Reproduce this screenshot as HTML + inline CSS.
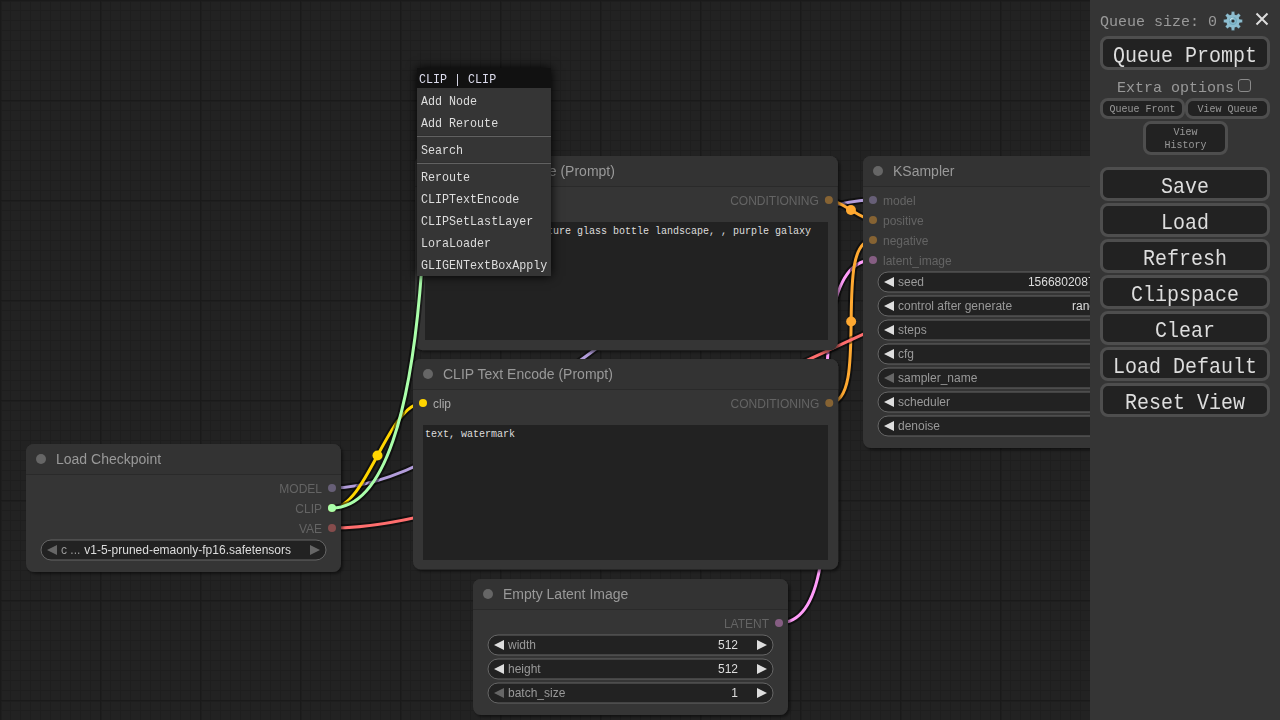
<!DOCTYPE html>
<html><head><meta charset="utf-8"><style>
html,body{margin:0;padding:0;width:1280px;height:720px;overflow:hidden;background:#222;}
svg,.panel,.qs,.btn{will-change:transform;}
svg text{font-family:"Liberation Sans",sans-serif;}
.tt{font-size:14px;fill:#999;}
.st{font-size:12px;}
.wl{font-size:12px;fill:#999;}
.wv{font-size:12px;fill:#DDD;}
.ta{position:absolute;background:#222;color:#ddd;font-family:"Liberation Mono",monospace;font-size:10px;line-height:12px;padding:4px 2px 2px 2px;box-sizing:border-box;white-space:pre-wrap;overflow:hidden;}
.menu{position:absolute;left:417px;top:68px;width:134px;height:208px;background:#353535;box-shadow:0 0 10px #000;font-family:"Liberation Mono",monospace;font-size:11.7px;}
.mt{height:20px;background:#111;color:#dde;padding-left:2px;line-height:20px;box-sizing:border-box;padding-top:2px;}
.me{height:20px;margin:2px;padding-left:2px;color:#ddd;line-height:20px;box-sizing:border-box;padding-top:2px;white-space:nowrap;}
.sep{border-top:1px solid #303030;border-bottom:1px solid #616161;height:0;margin:3px 0 2px 0;}
.panel{position:absolute;left:1090px;top:0;width:190px;height:720px;background:#353535;font-family:"Liberation Mono",monospace;color:#999;}
.qs{position:absolute;left:1100px;top:14px;font-size:15px;line-height:18px;color:#999;font-family:"Liberation Mono",monospace;}
.btn{position:absolute;box-sizing:border-box;border:3px solid #4e4e4e;background:#222;color:#ddd;border-radius:8px;text-align:center;font-family:"Liberation Mono",monospace;}
.big{left:1100px;width:170px;height:34px;font-size:20px;line-height:28px;padding-top:3.5px;}
.sy1{display:inline-block;transform:scaleY(1.12);transform-origin:50% 19.3px;}
.sy2{display:inline-block;transform:scaleY(1.1);transform-origin:50% 11px;}
.ms{display:inline-block;transform:scaleY(1.1);transform-origin:0 13px;}
.sm{font-size:10px;color:#999;line-height:14px;}
</style></head><body>
<svg width="1280" height="720" style="position:absolute;left:0;top:0">
<defs>
<pattern id="g" width="100" height="100" patternUnits="userSpaceOnUse"><rect x="10" y="0" width="1" height="100" fill="#1e1e1e"/><rect x="0" y="10" width="100" height="1" fill="#1e1e1e"/><rect x="20" y="0" width="1" height="100" fill="#1e1e1e"/><rect x="0" y="20" width="100" height="1" fill="#1e1e1e"/><rect x="30" y="0" width="1" height="100" fill="#1e1e1e"/><rect x="0" y="30" width="100" height="1" fill="#1e1e1e"/><rect x="40" y="0" width="1" height="100" fill="#1e1e1e"/><rect x="0" y="40" width="100" height="1" fill="#1e1e1e"/><rect x="50" y="0" width="1" height="100" fill="#1e1e1e"/><rect x="0" y="50" width="100" height="1" fill="#1e1e1e"/><rect x="60" y="0" width="1" height="100" fill="#1e1e1e"/><rect x="0" y="60" width="100" height="1" fill="#1e1e1e"/><rect x="70" y="0" width="1" height="100" fill="#1e1e1e"/><rect x="0" y="70" width="100" height="1" fill="#1e1e1e"/><rect x="80" y="0" width="1" height="100" fill="#1e1e1e"/><rect x="0" y="80" width="100" height="1" fill="#1e1e1e"/><rect x="90" y="0" width="1" height="100" fill="#1e1e1e"/><rect x="0" y="90" width="100" height="1" fill="#1e1e1e"/><rect x="1" y="0" width="1" height="100" fill="#1e1e1e"/><rect x="0" y="1" width="100" height="1" fill="#1e1e1e"/><rect x="0" y="0" width="1" height="100" fill="#1a1a1a"/><rect x="0" y="0" width="100" height="1" fill="#1a1a1a"/></pattern>
<filter id="sh" x="-10%" y="-10%" width="120%" height="120%"><feDropShadow dx="2" dy="2" stdDeviation="1.5" flood-color="#000" flood-opacity="0.5"/></filter>
</defs>
<rect width="1280" height="720" fill="#222"/>
<rect width="1280" height="720" fill="url(#g)"/>
<path d="M332 488 C485.22 488 719.78 200 873 200" stroke="rgba(0,0,0,0.5)" stroke-width="7" fill="none"/>
<path d="M332 488 C485.22 488 719.78 200 873 200" stroke="#B39DDB" stroke-width="3" fill="none"/>
<circle cx="602.5" cy="344" r="5" fill="#B39DDB"/>
<path d="M779 623 C872.74 623 779.26 260 873 260" stroke="rgba(0,0,0,0.5)" stroke-width="7" fill="none"/>
<path d="M779 623 C872.74 623 779.26 260 873 260" stroke="#FF9CF9" stroke-width="3" fill="none"/>
<circle cx="826" cy="441.5" r="5" fill="#FF9CF9"/>
<path d="M828.85 200 C840.97 200 860.88 220 873 220" stroke="rgba(0,0,0,0.5)" stroke-width="7" fill="none"/>
<path d="M828.85 200 C840.97 200 860.88 220 873 220" stroke="#FFA931" stroke-width="3" fill="none"/>
<circle cx="850.92" cy="210" r="5" fill="#FFA931"/>
<path d="M332 508 C366.74 508 388.26 403 423 403" stroke="rgba(0,0,0,0.5)" stroke-width="7" fill="none"/>
<path d="M332 508 C366.74 508 388.26 403 423 403" stroke="#FFD500" stroke-width="3" fill="none"/>
<circle cx="377.5" cy="455.5" r="5" fill="#FFD500"/>
<path d="M829.28 403 C871.47 403 830.81 240 873 240" stroke="rgba(0,0,0,0.5)" stroke-width="7" fill="none"/>
<path d="M829.28 403 C871.47 403 830.81 240 873 240" stroke="#FFA931" stroke-width="3" fill="none"/>
<circle cx="851.14" cy="321.5" r="5" fill="#FFA931"/>
<path d="M1169 200 C1181.51 200 1206.49 202 1219 202" stroke="rgba(0,0,0,0.5)" stroke-width="7" fill="none"/>
<path d="M1169 200 C1181.51 200 1206.49 202 1219 202" stroke="#FF9CF9" stroke-width="3" fill="none"/>
<circle cx="1194" cy="201" r="5" fill="#FF9CF9"/>
<path d="M332 528 C566.57 528 984.43 222 1219 222" stroke="rgba(0,0,0,0.5)" stroke-width="7" fill="none"/>
<path d="M332 528 C566.57 528 984.43 222 1219 222" stroke="#FF6E6E" stroke-width="3" fill="none"/>
<circle cx="775.5" cy="375" r="5" fill="#FF6E6E"/>
<path d="M871 156 h299 a8 8 0 0 1 8 8 v276 a8 8 0 0 1 -8 8 h-299 a8 8 0 0 1 -8 -8 v-276 a8 8 0 0 1 8 -8 Z" fill="#353535" filter="url(#sh)"/>
<rect x="863" y="186" width="315" height="1" fill="rgba(0,0,0,0.2)"/>
<path d="M871 156 h299 a8 8 0 0 1 8 8 V186 H863 V164 a8 8 0 0 1 8 -8 Z" fill="#333"/>
<circle cx="878" cy="171" r="5" fill="#666"/>
<text x="893" y="176" class="tt">KSampler</text>
<circle cx="873" cy="200" r="4" fill="#675f77"/>
<text x="883" y="205" class="st" fill="#646464">model</text>
<circle cx="873" cy="220" r="4" fill="#866333"/>
<text x="883" y="225" class="st" fill="#646464">positive</text>
<circle cx="873" cy="240" r="4" fill="#866333"/>
<text x="883" y="245" class="st" fill="#646464">negative</text>
<circle cx="873" cy="260" r="4" fill="#865e83"/>
<text x="883" y="265" class="st" fill="#646464">latent_image</text>
<circle cx="1169" cy="200" r="4" fill="#865e83"/>
<text x="1159" y="205" class="st" text-anchor="end" fill="#646464">LATENT</text>
<rect x="878" y="272" width="285" height="20" rx="10" fill="#222" stroke="#666" stroke-width="1"/>
<path d="M894 277 L884 282 L894 287 Z" fill="#DDD"/>
<path d="M1147 277 L1157 282 L1147 287 Z" fill="#DDD"/>
<text x="898" y="286" class="wl">seed</text>
<text x="1128" y="286" class="wv" text-anchor="end">156680208700286</text>
<rect x="878" y="296" width="285" height="20" rx="10" fill="#222" stroke="#666" stroke-width="1"/>
<path d="M894 301 L884 306 L894 311 Z" fill="#DDD"/>
<path d="M1147 301 L1157 306 L1147 311 Z" fill="#DDD"/>
<text x="898" y="310" class="wl">control after generate</text>
<text x="1128" y="310" class="wv" text-anchor="end">randomize</text>
<rect x="878" y="320" width="285" height="20" rx="10" fill="#222" stroke="#666" stroke-width="1"/>
<path d="M894 325 L884 330 L894 335 Z" fill="#DDD"/>
<path d="M1147 325 L1157 330 L1147 335 Z" fill="#DDD"/>
<text x="898" y="334" class="wl">steps</text>
<text x="1128" y="334" class="wv" text-anchor="end">20</text>
<rect x="878" y="344" width="285" height="20" rx="10" fill="#222" stroke="#666" stroke-width="1"/>
<path d="M894 349 L884 354 L894 359 Z" fill="#DDD"/>
<path d="M1147 349 L1157 354 L1147 359 Z" fill="#DDD"/>
<text x="898" y="358" class="wl">cfg</text>
<text x="1128" y="358" class="wv" text-anchor="end">8.0</text>
<rect x="878" y="368" width="285" height="20" rx="10" fill="#222" stroke="#666" stroke-width="1"/>
<path d="M894 373 L884 378 L894 383 Z" fill="#666"/>
<path d="M1147 373 L1157 378 L1147 383 Z" fill="#DDD"/>
<text x="898" y="382" class="wl">sampler_name</text>
<text x="1128" y="382" class="wv" text-anchor="end">euler</text>
<rect x="878" y="392" width="285" height="20" rx="10" fill="#222" stroke="#666" stroke-width="1"/>
<path d="M894 397 L884 402 L894 407 Z" fill="#DDD"/>
<path d="M1147 397 L1157 402 L1147 407 Z" fill="#DDD"/>
<text x="898" y="406" class="wl">scheduler</text>
<text x="1128" y="406" class="wv" text-anchor="end">normal</text>
<rect x="878" y="416" width="285" height="20" rx="10" fill="#222" stroke="#666" stroke-width="1"/>
<path d="M894 421 L884 426 L894 431 Z" fill="#DDD"/>
<path d="M1147 421 L1157 426 L1147 431 Z" fill="#666"/>
<text x="898" y="430" class="wl">denoise</text>
<text x="1128" y="430" class="wv" text-anchor="end">1.00</text>
<path d="M34 444 h299 a8 8 0 0 1 8 8 v112 a8 8 0 0 1 -8 8 h-299 a8 8 0 0 1 -8 -8 v-112 a8 8 0 0 1 8 -8 Z" fill="#353535" filter="url(#sh)"/>
<rect x="26" y="474" width="315" height="1" fill="rgba(0,0,0,0.2)"/>
<path d="M34 444 h299 a8 8 0 0 1 8 8 V474 H26 V452 a8 8 0 0 1 8 -8 Z" fill="#333"/>
<circle cx="41" cy="459" r="5" fill="#666"/>
<text x="56" y="464" class="tt">Load Checkpoint</text>
<circle cx="332" cy="488" r="4" fill="#675f77"/>
<text x="322" y="493" class="st" text-anchor="end" fill="#646464">MODEL</text>
<circle cx="332" cy="508" r="4" fill="#867520"/>
<text x="322" y="513" class="st" text-anchor="end" fill="#646464">CLIP</text>
<circle cx="332" cy="528" r="4" fill="#864c4c"/>
<text x="322" y="533" class="st" text-anchor="end" fill="#646464">VAE</text>
<rect x="41" y="540" width="285" height="20" rx="10" fill="#222" stroke="#666" stroke-width="1"/>
<path d="M57 545 L47 550 L57 555 Z" fill="#666"/>
<path d="M310 545 L320 550 L310 555 Z" fill="#666"/>
<text x="61" y="554" class="wl">c ...</text>
<text x="291" y="554" class="wv" text-anchor="end">v1-5-pruned-emaonly-fp16.safetensors</text>
<path d="M481 579 h299 a8 8 0 0 1 8 8 v120 a8 8 0 0 1 -8 8 h-299 a8 8 0 0 1 -8 -8 v-120 a8 8 0 0 1 8 -8 Z" fill="#353535" filter="url(#sh)"/>
<rect x="473" y="609" width="315" height="1" fill="rgba(0,0,0,0.2)"/>
<path d="M481 579 h299 a8 8 0 0 1 8 8 V609 H473 V587 a8 8 0 0 1 8 -8 Z" fill="#333"/>
<circle cx="488" cy="594" r="5" fill="#666"/>
<text x="503" y="599" class="tt">Empty Latent Image</text>
<circle cx="779" cy="623" r="4" fill="#865e83"/>
<text x="769" y="628" class="st" text-anchor="end" fill="#646464">LATENT</text>
<rect x="488" y="635" width="285" height="20" rx="10" fill="#222" stroke="#666" stroke-width="1"/>
<path d="M504 640 L494 645 L504 650 Z" fill="#DDD"/>
<path d="M757 640 L767 645 L757 650 Z" fill="#DDD"/>
<text x="508" y="649" class="wl">width</text>
<text x="738" y="649" class="wv" text-anchor="end">512</text>
<rect x="488" y="659" width="285" height="20" rx="10" fill="#222" stroke="#666" stroke-width="1"/>
<path d="M504 664 L494 669 L504 674 Z" fill="#DDD"/>
<path d="M757 664 L767 669 L757 674 Z" fill="#DDD"/>
<text x="508" y="673" class="wl">height</text>
<text x="738" y="673" class="wv" text-anchor="end">512</text>
<rect x="488" y="683" width="285" height="20" rx="10" fill="#222" stroke="#666" stroke-width="1"/>
<path d="M504 688 L494 693 L504 698 Z" fill="#666"/>
<path d="M757 688 L767 693 L757 698 Z" fill="#DDD"/>
<text x="508" y="697" class="wl">batch_size</text>
<text x="738" y="697" class="wv" text-anchor="end">1</text>
<path d="M423 156 h406.85 a8 8 0 0 1 8 8 v178.31 a8 8 0 0 1 -8 8 h-406.85 a8 8 0 0 1 -8 -8 v-178.31 a8 8 0 0 1 8 -8 Z" fill="#353535" filter="url(#sh)"/>
<rect x="415" y="186" width="422.85" height="1" fill="rgba(0,0,0,0.2)"/>
<path d="M423 156 h406.85 a8 8 0 0 1 8 8 V186 H415 V164 a8 8 0 0 1 8 -8 Z" fill="#333"/>
<circle cx="430" cy="171" r="5" fill="#666"/>
<text x="445" y="176" class="tt">CLIP Text Encode (Prompt)</text>
<circle cx="425" cy="200" r="4" fill="#ffd500"/>
<text x="435" y="205" class="st" fill="#aaaaaa">clip</text>
<circle cx="828.85" cy="200" r="4" fill="#866333"/>
<text x="818.85" y="205" class="st" text-anchor="end" fill="#646464">CONDITIONING</text>
<path d="M421 359 h409.28 a8 8 0 0 1 8 8 v194.61 a8 8 0 0 1 -8 8 h-409.28 a8 8 0 0 1 -8 -8 v-194.61 a8 8 0 0 1 8 -8 Z" fill="#353535" filter="url(#sh)"/>
<rect x="413" y="389" width="425.28" height="1" fill="rgba(0,0,0,0.2)"/>
<path d="M421 359 h409.28 a8 8 0 0 1 8 8 V389 H413 V367 a8 8 0 0 1 8 -8 Z" fill="#333"/>
<circle cx="428" cy="374" r="5" fill="#666"/>
<text x="443" y="379" class="tt">CLIP Text Encode (Prompt)</text>
<circle cx="423" cy="403" r="4" fill="#ffd500"/>
<text x="433" y="408" class="st" fill="#aaaaaa">clip</text>
<circle cx="829.28" cy="403" r="4" fill="#866333"/>
<text x="819.28" y="408" class="st" text-anchor="end" fill="#646464">CONDITIONING</text>
</svg>
<svg width="1280" height="720" style="position:absolute;left:0;top:0"><path d="M332 508 C441.99 508 425 78 425 78" stroke="rgba(0,0,0,0.5)" stroke-width="7" fill="none"/>
<path d="M332 508 C441.99 508 425 78 425 78" stroke="#AFA" stroke-width="3" fill="none"/>
<circle cx="332" cy="508" r="4" fill="#AFA"/></svg>
<div class="ta" style="left:425px;top:222px;width:403px;height:118px;">beautiful scenery nature glass bottle landscape, , purple galaxy bottle,</div>
<div class="ta" style="left:423px;top:425px;width:405px;height:135px;">text, watermark</div>
<div class="menu"><div class="mt"><span class="ms">CLIP | CLIP</span></div><div class="me"><span class="ms">Add Node</span></div><div class="me"><span class="ms">Add Reroute</span></div><div class="sep"></div><div class="me"><span class="ms">Search</span></div><div class="sep"></div><div class="me"><span class="ms">Reroute</span></div><div class="me"><span class="ms">CLIPTextEncode</span></div><div class="me"><span class="ms">CLIPSetLastLayer</span></div><div class="me"><span class="ms">LoraLoader</span></div><div class="me"><span class="ms">GLIGENTextBoxApply</span></div></div>
<div class="panel"></div>
<div class="qs">Queue size: 0</div>
<svg width="24" height="24" viewBox="-12 -12 24 24" style="position:absolute;left:1220.8px;top:8.8px">
<g fill="#8dbdcf" stroke="#2c3236" stroke-width="0.5" stroke-opacity="0.6"><path d="M-1.5 -9.4 H1.5 L1.9 -5.5 H-1.9 Z" transform="rotate(0)"/><path d="M-1.5 -9.4 H1.5 L1.9 -5.5 H-1.9 Z" transform="rotate(45)"/><path d="M-1.5 -9.4 H1.5 L1.9 -5.5 H-1.9 Z" transform="rotate(90)"/><path d="M-1.5 -9.4 H1.5 L1.9 -5.5 H-1.9 Z" transform="rotate(135)"/><path d="M-1.5 -9.4 H1.5 L1.9 -5.5 H-1.9 Z" transform="rotate(180)"/><path d="M-1.5 -9.4 H1.5 L1.9 -5.5 H-1.9 Z" transform="rotate(225)"/><path d="M-1.5 -9.4 H1.5 L1.9 -5.5 H-1.9 Z" transform="rotate(270)"/><path d="M-1.5 -9.4 H1.5 L1.9 -5.5 H-1.9 Z" transform="rotate(315)"/></g><circle r="6.6" fill="#8dbdcf"/>
<circle r="3.7" fill="#84b9cc" stroke="#6aa6ba" stroke-width="0.8"/><path d="M-2.9 -0.5 A3 3 0 0 1 0.5 -3" stroke="#d5edf5" stroke-width="0.9" fill="none"/><circle r="1.6" fill="#2a2c2e"/>
</svg>
<div style="position:absolute;left:1255px;top:12px;width:14px;height:14px;">
<svg width="14" height="14" viewBox="0 0 14 14"><path d="M1.5 1.5 L12.5 12.5 M12.5 1.5 L1.5 12.5" stroke="#ddd" stroke-width="2"/></svg></div>
<div class="btn big" style="top:36px;"><span class="sy1">Queue Prompt</span></div>
<div style="position:absolute;left:1117px;top:80px;font-size:15px;line-height:18px;color:#999;font-family:'Liberation Mono',monospace;">Extra options</div>
<div style="position:absolute;left:1238px;top:79px;width:11px;height:11px;border:1px solid #8a8a8a;border-radius:3px;background:#3a3a3a;"></div>
<div class="btn sm" style="left:1100px;top:98px;width:85px;height:21px;border-width:3px;line-height:15px;padding-top:1px;"><span class="sy2">Queue Front</span></div>
<div class="btn sm" style="left:1185px;top:98px;width:85px;height:21px;border-width:3px;line-height:15px;padding-top:1px;"><span class="sy2">View Queue</span></div>
<div class="btn sm" style="left:1143px;top:121px;width:85px;height:34px;border-width:3px;padding-top:3px;line-height:12.1px;"><span class="sy2" style="line-height:12.1px;transform-origin:50% 9px;">View<br>History</span></div>
<div class="btn big" style="top:167px;"><span class="sy1">Save</span></div><div class="btn big" style="top:203px;"><span class="sy1">Load</span></div><div class="btn big" style="top:239px;"><span class="sy1">Refresh</span></div><div class="btn big" style="top:275px;"><span class="sy1">Clipspace</span></div><div class="btn big" style="top:311px;"><span class="sy1">Clear</span></div><div class="btn big" style="top:347px;"><span class="sy1">Load Default</span></div><div class="btn big" style="top:383px;"><span class="sy1">Reset View</span></div>
</body></html>
